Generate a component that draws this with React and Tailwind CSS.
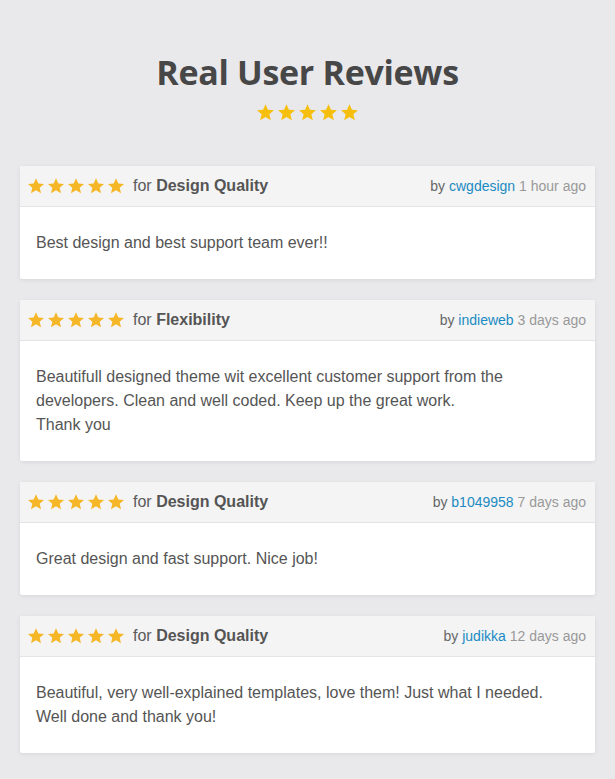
import React from 'react';

const reviews = [
    { topic: 'Design Quality', user: 'cwgdesign', time: '1 hour ago', text: ['Best design and best support team ever!!'] },
    {
        topic: 'Flexibility',
        user: 'indieweb',
        time: '3 days ago',
        text: [
            'Beautifull designed theme wit excellent customer support from the',
            'developers. Clean and well coded. Keep up the great work.',
            'Thank you',
        ],
    },
    { topic: 'Design Quality', user: 'b1049958', time: '7 days ago', text: ['Great design and fast support. Nice job!'] },
    {
        topic: 'Design Quality',
        user: 'judikka',
        time: '12 days ago',
        text: ['Beautiful, very well-explained templates, love them! Just what I needed.', 'Well done and thank you!'],
    },
];

function Star({ className }) {
    return (
        <svg viewBox="0 0 24 24" className={className} fill="currentColor">
            <path d="M12 1.6l3.1 7 7.6.7-5.8 5 1.8 7.5L12 17.8l-6.7 4 1.8-7.5-5.8-5 7.6-.7z" />
        </svg>
    );
}

export default function App() {
    return (
        <div className="min-h-screen bg-[#e9e9eb] px-5 pt-[50px] pb-6" style={{ fontFamily: '"Liberation Sans", Arial, sans-serif' }}>
            <div className="text-center">
                <h1
                    className="text-[34px] font-bold text-[#474747] leading-[44px] tracking-[-0.3px]"
                    style={{ fontFamily: '"Open Sans", sans-serif' }}
                >
                    Real User Reviews
                </h1>
                <div className="flex justify-center mt-[9px]">
                    <div className="flex gap-[2px] text-[#f6bf0e]">
                        {[0, 1, 2, 3, 4].map((i) => (
                            <Star key={i} className="w-[19px] h-[19px]" />
                        ))}
                    </div>
                </div>
            </div>

            <div className="mt-[44px] flex flex-col gap-[21px]">
                {reviews.map((r, i) => (
                    <div key={i} className="bg-white rounded-[2px] shadow-[0_1px_4px_rgba(0,0,0,0.08)]">
                        <div className="h-[41px] flex items-center justify-between pl-[7px] pr-[9px] bg-[#f4f4f4] border-b border-[#e2e5e8] rounded-t-[2px]">
                            <div className="flex items-center">
                                <div className="flex gap-[2px] text-[#f5b728]">
                                    {[0, 1, 2, 3, 4].map((k) => (
                                        <Star key={k} className="w-[18px] h-[18px]" />
                                    ))}
                                </div>
                                <span className="ml-[8px] text-[16px] text-[#5b5b5b]">
                                    for <b className="text-[#555]">{r.topic}</b>
                                </span>
                            </div>
                            <div className="text-[14px] text-[#666]">
                                by <span className="text-[#1a8bc2]">{r.user}</span> <span className="text-[#999]">{r.time}</span>
                            </div>
                        </div>
                        <div className="px-4 py-6 text-[16px] leading-[24px] text-[#555]">
                            {r.text.map((t, k) => (
                                <div key={k}>{t}</div>
                            ))}
                        </div>
                    </div>
                ))}
            </div>
        </div>
    );
}
